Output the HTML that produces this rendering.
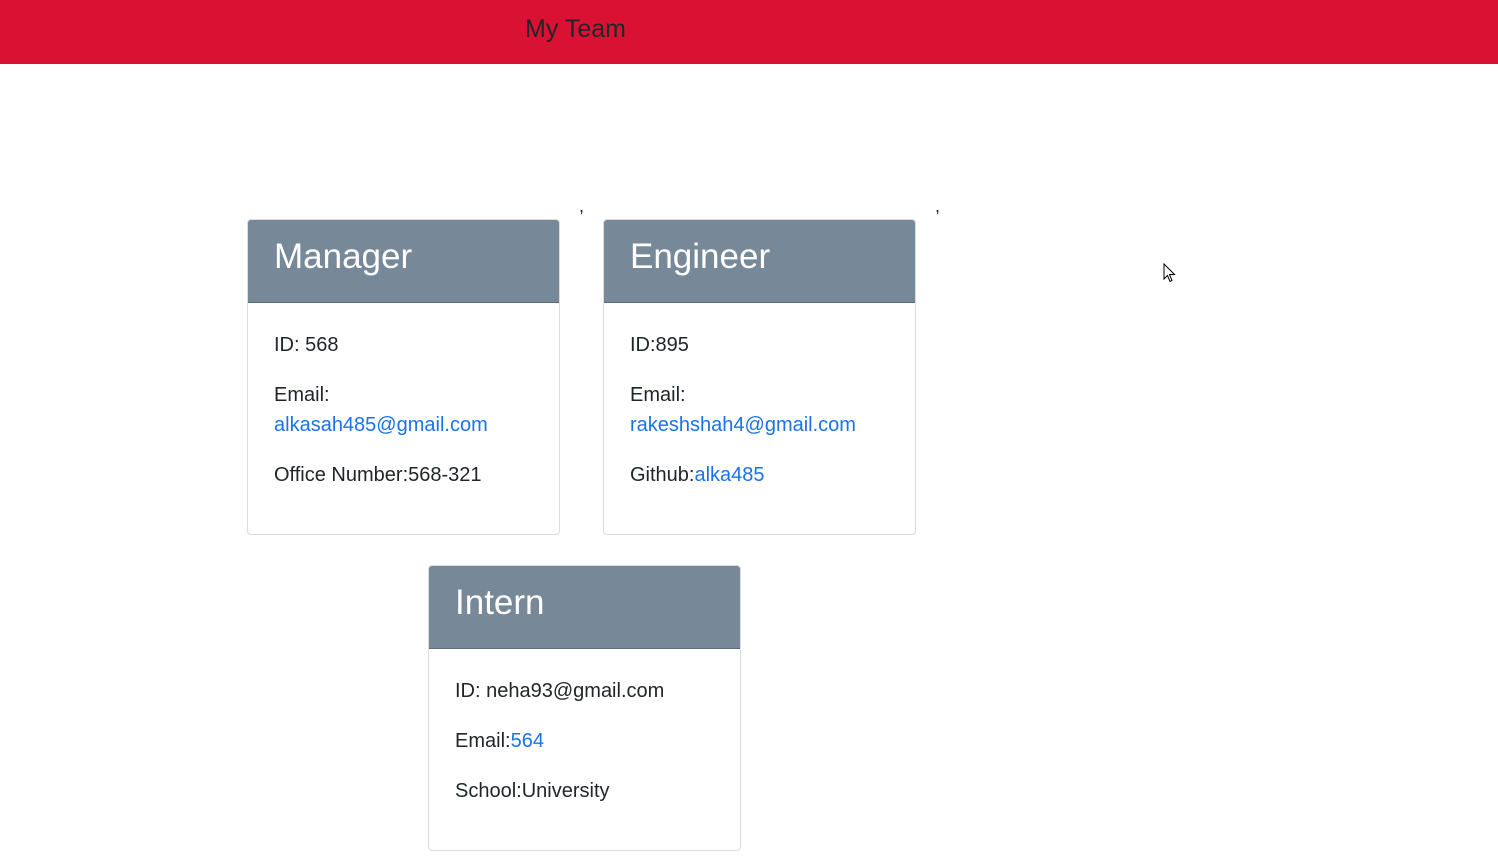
<!DOCTYPE html>
<html><head><style>
body{margin:0;width:1498px;height:868px;background:#fff;font-family:"Liberation Sans",Arial,sans-serif;position:relative;overflow:hidden;color:#212529}
.top{position:absolute;left:0;top:0;width:1498px;height:64px;background:#d91233}
.top span{position:absolute;left:525px;top:14px;font-size:25px;line-height:30px;color:#212529}
.card{position:absolute;width:311px;border:1px solid #dcdcdc;border-radius:4px;background:#fff;overflow:hidden}
.hd{height:83px;background:#778899;color:#fff;font-size:35px;line-height:36px;border-bottom:1px solid #5f6d7a;box-sizing:border-box;padding:19px 0 0 26px}
.bd{padding:27px 25px 0 26px;font-size:20px;line-height:30px}
.bd p{margin:0 0 20px}
a{color:#1a73e8;text-decoration:none}
.c{position:absolute;font-size:18px;top:196px}
</style></head><body>
<div class="top"><span>My Team</span></div>
<div class="c" style="left:579px">,</div>
<div class="c" style="left:935px">,</div>
<div class="card" style="left:247px;top:219px;height:314px">
<div class="hd">Manager</div>
<div class="bd"><p>ID: 568</p><p>Email:<br><a>alkasah485@gmail.com</a></p><p>Office Number:568-321</p></div></div>
<div class="card" style="left:603px;top:219px;height:314px">
<div class="hd">Engineer</div>
<div class="bd"><p>ID:895</p><p>Email:<br><a>rakeshshah4@gmail.com</a></p><p>Github:<a>alka485</a></p></div></div>
<div class="card" style="left:428px;top:565px;height:284px">
<div class="hd">Intern</div>
<div class="bd"><p>ID: neha93@gmail.com</p><p>Email:<a>564</a></p><p>School:University</p></div></div>
<svg style="position:absolute;left:1163px;top:263px" width="14" height="20" viewBox="0 0 14 20"><path d="M1 1 L1 16 L4.5 12.5 L7 18.5 L9 17.5 L6.5 11.5 L11.5 11.5 Z" fill="#fff" stroke="#000" stroke-width="1"/></svg>
</body></html>
